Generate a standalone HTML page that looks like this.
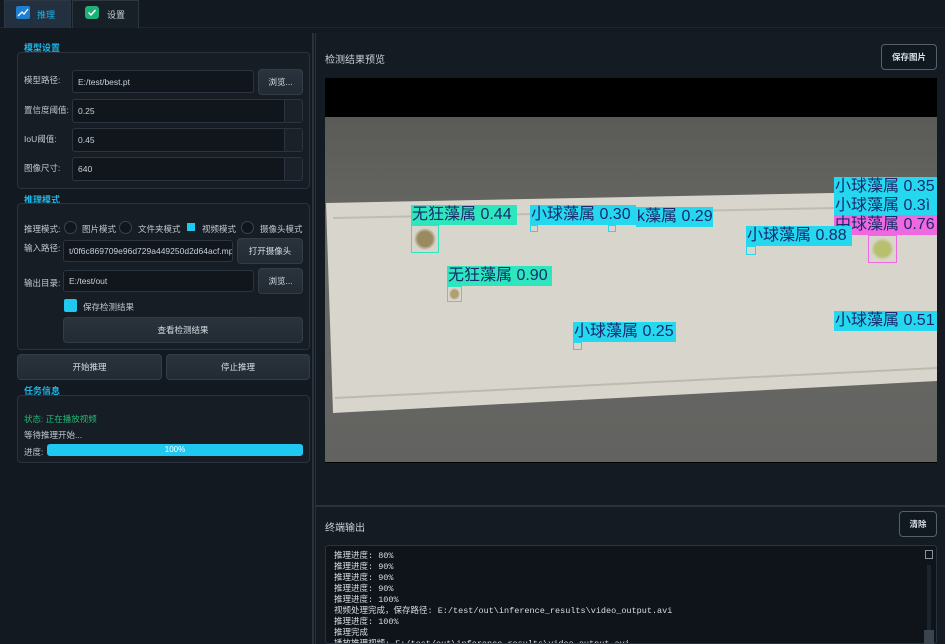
<!DOCTYPE html>
<html><head><meta charset="utf-8"><style>
*{box-sizing:border-box;margin:0;padding:0}
body{width:945px;height:644px;overflow:hidden;background:#121920;font-family:"Liberation Sans","Noto Sans CJK SC",sans-serif;color:#c8d0d8;font-size:9px;position:relative}
.a{position:absolute}
.gb{position:absolute;border:1px solid #2a333d;border-radius:4px;background:#161d24}
.gt{position:absolute;color:#1fb6e8;font-size:9px;font-weight:bold}
.in{position:absolute;background:#10161c;border:1px solid #2c353f;border-radius:3px;color:#c8d0d8;padding-left:5px;display:flex;align-items:center;font-size:8.5px;overflow:hidden;white-space:nowrap}
.btn{position:absolute;background:linear-gradient(#2a333d,#222a33);border:1px solid #333d48;border-radius:4px;color:#d8dee4;display:flex;align-items:center;justify-content:center;font-size:8.5px}
.lb{position:absolute;font-size:8.5px;color:#c0c8d0}
.sp{position:absolute;right:0;top:0;width:18px;height:100%;border-left:1px solid #2c353f;background:#1a2128}
.rd{position:absolute;width:13px;height:13px;border-radius:50%;border:1px solid #3a444e;background:#10161c}
.tag{position:absolute;height:20px;font-size:16px;line-height:20px;color:#1a2a6c;white-space:nowrap;overflow:hidden;padding-left:1px}
.c{background:#25d8ef}.g{background:#2ee6bd}.p{background:#f068e0}
.bx{position:absolute;border:1.5px solid #25d8ef}
.mono{font-family:"Liberation Mono","Noto Sans CJK SC",monospace;font-size:8.5px;line-height:11px;color:#d8dde2}
</style></head><body>
<div class="a" style="left:0;top:0;width:945px;height:28px;background:#121920;border-bottom:1px solid #1e262e"></div>
<div class="a" style="left:4px;top:0;width:67px;height:28px;background:#223040;border:1px solid #2c3742;border-bottom:none"></div>
<div class="a" style="left:16px;top:6px;width:14px;height:13px;background:#1e7fd0;border-radius:2px"></div>
<svg class="a" style="left:16px;top:6px" width="14" height="13"><path d="M2 10 L6 6 L8 8 L12 3" stroke="#fff" stroke-width="1.3" fill="none"/></svg>
<div class="a" style="left:37px;top:8px;color:#1fb6e8;font-size:9px">推理</div>
<div class="a" style="left:72px;top:0;width:67px;height:28px;background:#171f27;border:1px solid #2c3742;border-bottom:none"></div>
<div class="a" style="left:85px;top:6px;width:14px;height:13px;background:#1fb07a;border-radius:3px"></div>
<svg class="a" style="left:85px;top:6px" width="14" height="13"><path d="M3.5 6.5 L6 9 L10.5 4" stroke="#fff" stroke-width="1.4" fill="none"/></svg>
<div class="a" style="left:107px;top:8px;color:#c8d0d8;font-size:9px">设置</div>
<div class="a" style="left:312px;top:33px;width:2px;height:611px;background:#2a333d"></div>

<div class="gt" style="left:24px;top:41px">模型设置</div>
<div class="gb" style="left:17px;top:52px;width:293px;height:137px"></div>
<div class="lb" style="left:24px;top:74px">模型路径:</div>
<div class="in" style="left:72px;top:70px;width:182px;height:23px">E:/test/best.pt</div>
<div class="btn" style="left:258px;top:69px;width:45px;height:26px">浏览...</div>
<div class="lb" style="left:24px;top:104px">置信度阈值:</div>
<div class="in" style="left:72px;top:99px;width:231px;height:24px">0.25<div class="sp"></div></div>
<div class="lb" style="left:24px;top:133px">IoU阈值:</div>
<div class="in" style="left:72px;top:128px;width:231px;height:24px">0.45<div class="sp"></div></div>
<div class="lb" style="left:24px;top:162px">图像尺寸:</div>
<div class="in" style="left:72px;top:157px;width:231px;height:24px">640<div class="sp"></div></div>

<div class="gt" style="left:24px;top:193px">推理模式</div>
<div class="gb" style="left:17px;top:203px;width:293px;height:147px"></div>
<div class="lb" style="left:24px;top:223px">推理模式:</div>
<div class="rd" style="left:64px;top:221px"></div><div class="lb" style="left:82px;top:223px">图片模式</div>
<div class="rd" style="left:119px;top:221px"></div><div class="lb" style="left:138px;top:223px">文件夹模式</div>
<div class="a" style="left:187px;top:223px;width:8px;height:8px;background:#1fc8f0"></div><div class="lb" style="left:202px;top:223px">视频模式</div>
<div class="rd" style="left:241px;top:221px"></div><div class="lb" style="left:260px;top:223px">摄像头模式</div>
<div class="lb" style="left:24px;top:242px">输入路径:</div>
<div class="in" style="left:63px;top:240px;width:170px;height:22px">t/0f6c869709e96d729a449250d2d64acf.mp4</div>
<div class="btn" style="left:237px;top:238px;width:66px;height:26px">打开摄像头</div>
<div class="lb" style="left:24px;top:277px">输出目录:</div>
<div class="in" style="left:63px;top:270px;width:191px;height:22px">E:/test/out</div>
<div class="btn" style="left:258px;top:268px;width:45px;height:26px">浏览...</div>
<div class="a" style="left:64px;top:299px;width:13px;height:13px;background:#1fc8f0;border-radius:2px"></div>
<div class="lb" style="left:83px;top:301px">保存检测结果</div>
<div class="btn" style="left:63px;top:317px;width:240px;height:26px">查看检测结果</div>

<div class="btn" style="left:17px;top:354px;width:145px;height:26px">开始推理</div>
<div class="btn" style="left:166px;top:354px;width:144px;height:26px">停止推理</div>

<div class="gt" style="left:24px;top:384px">任务信息</div>
<div class="gb" style="left:17px;top:395px;width:293px;height:68px"></div>
<div class="lb" style="left:24px;top:413px;color:#22b877">状态: 正在播放视频</div>
<div class="lb" style="left:24px;top:429px">等待推理开始...</div>
<div class="lb" style="left:24px;top:446px">进度:</div>
<div class="a" style="left:47px;top:444px;width:256px;height:12px;background:#1ec8f0;border-radius:3px;color:#fff;font-size:8px;text-align:center;line-height:12px">100%</div>

<div class="a" style="left:315px;top:33px;width:630px;height:472px;background:#141b22;border-left:1px solid #2a333d"></div>
<div class="a" style="left:325px;top:51px;font-size:10px;color:#c8d0d8">检测结果预览</div>
<div class="btn" style="left:881px;top:44px;width:56px;height:26px;background:#101820;border:1px solid #55606c;font-weight:bold">保存图片</div>
<div class="a" style="left:325px;top:78px;width:612px;height:385px;background:#000;overflow:hidden">
 <div class="a" style="left:0;top:39px;width:612px;height:345px;background:linear-gradient(180deg,#5a5a56,#6a6a66 40%,#626260)"></div>
 <svg class="a" style="left:0;top:0" width="612" height="385"><polygon points="1,125 612,113 612,303 8,335" fill="#d8d5cc"/><polyline points="8,140 612,128" stroke="#bfbcb3" stroke-width="2" fill="none"/><polyline points="10,320 612,290" stroke="#bdbab0" stroke-width="2" fill="none"/></svg>
</div>
<div class="tag g" style="left:411px;top:205px;width:106px">无狂藻属 0.44</div>
<div class="bx" style="left:411px;top:225px;width:28px;height:28px;border-color:#2ee6bd;background:radial-gradient(#9a8a60 40%,transparent 60%)"></div>
<div class="tag c" style="left:530px;top:205px;width:106px">小球藻属 0.30</div>
<div class="tag c" style="left:636px;top:207px;width:77px">k藻属 0.29</div>
<div class="bx" style="left:530px;top:225px;width:8px;height:7px"></div>
<div class="bx" style="left:608px;top:225px;width:8px;height:7px"></div>
<div class="tag c" style="left:834px;top:177px;width:103px">小球藻属 0.35</div>
<div class="tag c" style="left:834px;top:197px;width:103px;height:18px;line-height:18px">小球藻属 0.3ì</div>
<div class="tag p" style="left:834px;top:215px;width:103px">中球藻属 0.76</div>
<div class="tag c" style="left:746px;top:226px;width:106px">小球藻属 0.88</div>
<div class="bx" style="left:746px;top:246px;width:10px;height:9px"></div>
<div class="bx" style="left:868px;top:235px;width:29px;height:28px;border-color:#f068e0;background:radial-gradient(#b8c070 40%,transparent 60%)"></div>
<div class="tag g" style="left:447px;top:266px;width:105px">无狂藻属 0.90</div>
<div class="bx" style="left:447px;top:286px;width:15px;height:16px;border-color:#2ee6bd;background:radial-gradient(#b0a070 40%,transparent 60%)"></div>
<div class="tag c" style="left:573px;top:322px;width:103px">小球藻属 0.25</div>
<div class="bx" style="left:573px;top:342px;width:9px;height:8px"></div>
<div class="tag c" style="left:834px;top:311px;width:103px">小球藻属 0.51</div>

<div class="a" style="left:315px;top:505px;width:630px;height:139px;background:#141b22;border-left:1px solid #2a333d;border-top:2px solid #2a333d"></div>
<div class="a" style="left:325px;top:519px;font-size:10px;color:#c8d0d8">终端输出</div>
<div class="btn" style="left:899px;top:511px;width:38px;height:26px;background:#101820;border:1px solid #55606c;font-weight:bold">清除</div>
<div class="a" style="left:325px;top:545px;width:612px;height:99px;background:#0e141a;border:1px solid #2a333d;border-radius:3px;padding:5px 8px;overflow:hidden">
<div class="mono">推理进度: 80%<br>推理进度: 90%<br>推理进度: 90%<br>推理进度: 90%<br>推理进度: 100%<br>视频处理完成，保存路径: E:/test/out\inference_results\video_output.avi<br>推理进度: 100%<br>推理完成<br>播放推理视频: E:/test/out\inference_results\video_output.avi</div>
</div>
<div class="a" style="left:925px;top:550px;width:8px;height:9px;border:1px solid #8a949e"></div>
<div class="a" style="left:927px;top:565px;width:4px;height:79px;background:#1c242c"></div>
<div class="a" style="left:924px;top:630px;width:10px;height:14px;background:#3a444e"></div>
</body></html>
